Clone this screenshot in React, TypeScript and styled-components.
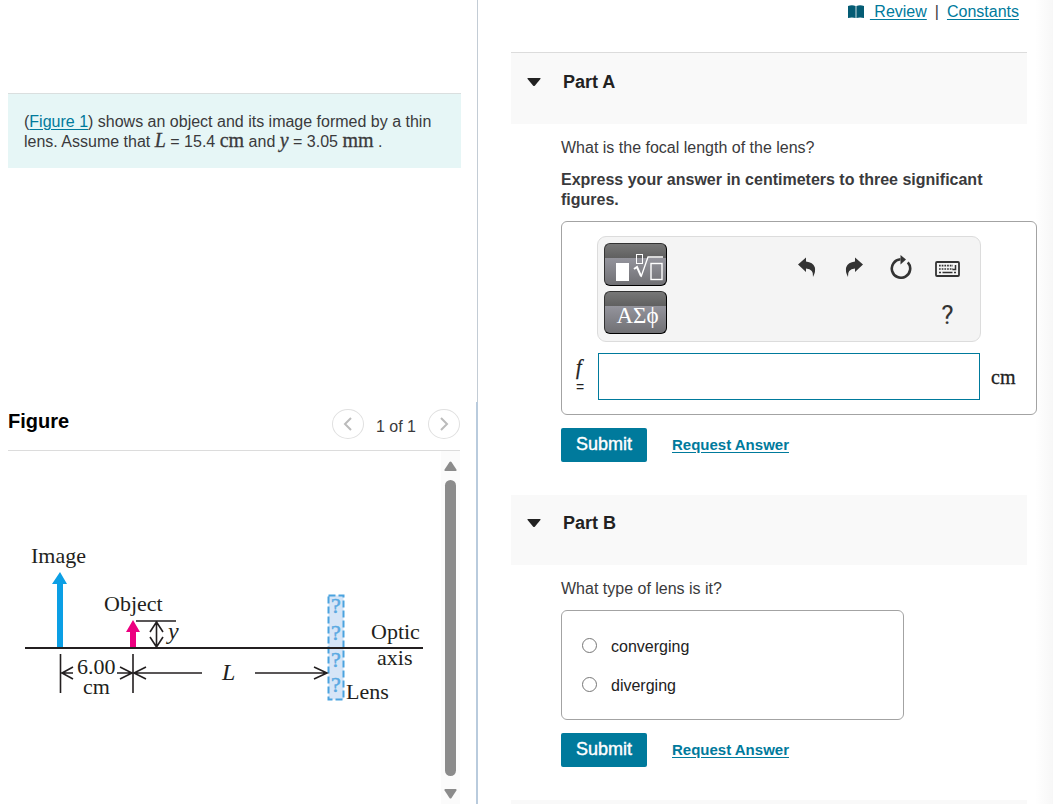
import React, { useState } from "react";
import styled, { createGlobalStyle } from "styled-components";

const sans = `"Liberation Sans", Arial, sans-serif`;
const serif = `"Liberation Serif", "Times New Roman", serif`;
const teal = "#007a9c";

const GlobalStyle = createGlobalStyle`
  *, *::before, *::after { box-sizing: border-box; }
  body {
    margin: 0;
    background: #fff;
    color: #3a3a3c;
    font: 16px/20px ${sans};
  }
  h1, h2, p, fieldset { margin: 0; }
  button, input { font: inherit; color: inherit; }
`;

const Page = styled.div`
  display: grid;
  grid-template-columns: minmax(0, 478fr) minmax(0, 575fr);
  min-height: 100vh;
`;

const LeftColumn = styled.div`
  display: grid;
  grid-template-rows: 1fr 1fr;
  min-width: 0;
`;

const IntroPane = styled.section`
  padding: 93px 16px 16px 8px;
  border-right: 1px solid #c3ccd5;
`;

const Intro = styled.p`
  padding: 18px 16px 16px;
  border-top: 1px solid #dadfdf;
  background: #e6f6f6;
`;

const Link = styled.a<{ $strong?: boolean }>`
  color: ${teal};
  font-size: ${(p) => (p.$strong ? "15px" : "16px")};
  font-weight: ${(p) => (p.$strong ? 700 : 400)};
  text-underline-offset: 2px;
`;

const MathText = styled.span<{ $italic?: boolean }>`
  font-family: ${serif};
  font-size: 20px;
  line-height: 16px;
  font-style: ${(p) => (p.$italic ? "italic" : "normal")};
  -webkit-text-stroke: 0.3px currentColor;
`;

const FigurePane = styled.section`
  display: flex;
  flex-direction: column;
  padding: 0 16px 0 8px;
  border-right: 2px solid #b9cbdd;
`;

const FigureHeader = styled.header`
  display: flex;
  align-items: center;
  justify-content: space-between;
  height: 49px;
  padding-bottom: 4px;
  border-bottom: 1px solid #dcdcdc;
`;

const FigureTitle = styled.h2`
  color: #000;
  font-size: 20px;
  line-height: 24px;
  padding-bottom: 6px;
`;

const Pager = styled.nav`
  display: flex;
  align-items: center;
  gap: 12px;
`;

const PagerLabel = styled.span`
  padding-top: 6px;
`;

const PagerButton = styled.button`
  display: grid;
  place-items: center;
  width: 32px;
  height: 30px;
  padding: 0;
  border: 1px solid #e0e0e0;
  border-radius: 50%;
  background: #fff;
`;

const FigureBody = styled.div`
  display: flex;
  flex: 1;
  justify-content: space-between;
`;

const Diagram = styled.svg`
  display: block;
  width: 400px;
  max-width: 100%;
  height: 170px;
  margin: 84px 0 0 17px;
  font-family: ${serif};
  font-size: 22px;
  fill: #231f20;
`;

const ScrollTrack = styled.div`
  display: flex;
  flex-direction: column;
  align-items: center;
  gap: 9px;
  width: 19px;
  padding: 10px 0 5px;
  background: #fbfbfb;
`;

const ScrollThumb = styled.div`
  flex: 1;
  width: 11px;
  margin-bottom: 4px;
  border-radius: 6px;
  background: #8b8b8b;
`;

const RightColumn = styled.main`
  display: flex;
  flex-direction: column;
  min-width: 0;
  padding: 0 16px 0 33px;
  background: linear-gradient(to left, #f7f7f7, #fff 18px);
`;

const Resources = styled.nav`
  display: flex;
  justify-content: flex-end;
  align-items: center;
  gap: 8px;
  height: 52px;
  padding: 0 18px 28px 0;
`;

const ReviewLink = styled.span`
  display: flex;
  align-items: center;
  gap: 6px;
`;

const PartHeader = styled.header<{ $ruled?: boolean }>`
  height: ${(p) => (p.$ruled ? "72px" : "70px")};
  margin-right: 10px;
  padding: ${(p) => (p.$ruled ? "19px" : "18px")} 16px;
  border-top: ${(p) => (p.$ruled ? "1px solid #dcdcdc" : "0")};
  background: #f9f9f9;
`;

const PartToggle = styled.button`
  display: flex;
  align-items: center;
  gap: 22px;
  padding: 0;
  border: 0;
  background: none;
  color: #222;
  font-size: 18px;
  font-weight: 700;
  line-height: 20px;
`;

const PartBody = styled.div`
  padding: 14px 0 33px 50px;
`;

const Prompt = styled.div`
  display: flex;
  flex-direction: column;
  gap: 12px;
  margin-bottom: 11px;
`;

const Directions = styled.p`
  max-width: 460px;
  font-weight: 700;
`;

const AnswerBox = styled.div`
  display: grid;
  grid-template-columns: 36px minmax(0, 1fr) 56px;
  row-gap: 11px;
  padding: 14px 0;
  border: 1px solid #a3a3a3;
  border-radius: 6px;
  background: #fff;
`;

const Toolbar = styled.div`
  grid-column: 1 / -1;
  display: flex;
  justify-content: space-between;
  height: 106px;
  margin: 0 55px 0 35px;
  padding: 6px 9px 6px 6px;
  border: 1px solid #dcdcdc;
  border-radius: 9px;
  background: #f4f4f4;
`;

const PaletteStack = styled.div`
  display: flex;
  flex-direction: column;
  gap: 5px;
`;

const PaletteButton = styled.button`
  display: grid;
  place-items: end center;
  width: 63px;
  height: 43px;
  padding: 0 0 3px 4px;
  border: 1px solid #333;
  border-right-color: #000;
  border-bottom-color: #000;
  border-radius: 6px;
  background: linear-gradient(#777, #606060 14px, #94949c 14px, #707074);
  color: #fff;
  font-family: ${serif};
  font-size: 23px;
  line-height: 28px;
`;

const ToolGrid = styled.div`
  display: grid;
  grid-template-columns: repeat(4, 47px);
  grid-template-rows: 48px 48px;
`;

const ToolButton = styled.button<{ $last?: boolean }>`
  grid-column: ${(p) => (p.$last ? 4 : "auto")};
  display: grid;
  place-items: center;
  padding: 0;
  border: 0;
  background: none;
  color: #333;
  font-family: Roboto, sans-serif;
  font-size: 26px;
  line-height: 28px;
`;

const VariableLabel = styled.label`
  display: flex;
  flex-direction: column;
  gap: 4px;
  padding: 6px 0 0 14px;
  color: #222;
  font-size: 14px;
  line-height: 16px;
`;

const AnswerInput = styled.input`
  width: 100%;
  height: 47px;
  padding: 0 8px;
  border: 1px solid ${teal};
  border-radius: 0;
  background: #fff;
  outline: 0;
`;

const Unit = styled.span`
  align-self: center;
  padding-left: 11px;
  color: #222;
  font-family: ${serif};
  font-size: 20px;
  -webkit-text-stroke: 0.3px currentColor;
`;

const Actions = styled.div`
  display: flex;
  align-items: center;
  gap: 25px;
  margin-top: 13px;
`;

const SubmitButton = styled.button`
  width: 86px;
  height: 34px;
  padding: 0 0 2px;
  border: 0;
  border-radius: 2px;
  background: ${teal};
  color: #fff;
  font-size: 18px;
  -webkit-text-stroke: 0.4px #fff;
`;

const Choices = styled.fieldset`
  display: flex;
  flex-direction: column;
  gap: 19px;
  width: 100%;
  max-width: 343px;
  padding: 26px 20px 23px;
  border: 1px solid #a3a3a3;
  border-radius: 6px;
  background: #fff;
`;

const Choice = styled.label`
  display: flex;
  align-items: center;
  gap: 14px;
  color: #222;
`;

const Radio = styled.input`
  width: 15px;
  height: 15px;
  margin: 0 0 3px;
`;

const NextPart = styled.section`
  flex: 1;
  margin-right: 10px;
  background: #f9f9f9;
`;

const Caret = () => (
  <svg width="14" height="9" viewBox="0 0 14 9" aria-hidden="true">
    <path d="M1 0h12q1 0 .4 1L8 7.400q-1 1-2 0L.6 1Q0 0 1 0Z" fill="#222" />
  </svg>
);

const ScrollArrow = ({ down }: { down?: boolean }) => (
  <svg width="13" height="10" viewBox="0 0 13 10" aria-hidden="true">
    <path
      d={down ? "M1 0h11q1 .5.4 1.500L7.500 9q-1 1-2 0L.6 1.500Q0 .5 1 0Z" : "M1 10h11q1-.5.4-1.500L7.500 1q-1-1-2 0L.6 8.500Q0 9.500 1 10Z"}
      fill="#8b8b8b"
    />
  </svg>
);

const Chevron = ({ right }: { right?: boolean }) => (
  <svg width="10" height="14" viewBox="0 0 10 14" fill="none" stroke="#bbb" strokeWidth="2" aria-hidden="true">
    <path d={right ? "M2 1l6 6-6 6" : "M8 1L2 7l6 6"} />
  </svg>
);

const BookIcon = () => (
  <svg width="16" height="14" viewBox="0 0 16 14" aria-hidden="true">
    <path d="M0 1Q4-.6 7.600 1v12Q4 11.800 0 13ZM8.400 1Q12-.6 16 1v12q-4-1.200-7.600 0Z" fill="#045c74" />
  </svg>
);

const TemplateIcon = () => (
  <svg width="50" height="30" viewBox="0 0 50 30" fill="none" stroke="#fff" aria-hidden="true">
    <rect x="3" y="11" width="13" height="18" fill="#fff" stroke="none" />
    <rect x="23.500" y="2.500" width="6" height="9" />
    <path d="M21 17l3-2 4 9" strokeWidth="2" />
    <path d="M28 25l7-20h15" strokeWidth="1.300" />
    <rect x="38" y="11.500" width="11" height="16" strokeWidth="1.400" />
  </svg>
);

const CurvedArrow = ({ forward }: { forward?: boolean }) => (
  <svg width="18" height="20" viewBox="0 0 18 20" aria-hidden="true">
    <path
      transform={forward ? "matrix(-1 0 0 1 18 0)" : undefined}
      d="M0 7.500L8 .4V4.500q7 .8 8.800 5.700 1.200 4-1.800 9.800 1-8-7-8.500V15Z"
      fill="#333"
    />
  </svg>
);

const ResetIcon = () => (
  <svg width="22" height="24" viewBox="0 0 22 24" aria-hidden="true">
    <path d="M17.800 7.300A9.200 9.200 0 1 1 10.500 4.300" fill="none" stroke="#333" strokeWidth="2.600" />
    <path d="M10.500 0l5.500 4.600-5.500 4.800Z" fill="#333" />
  </svg>
);

const KeyboardIcon = () => (
  <svg width="25" height="20" viewBox="0 -4 25 20" fill="none" stroke="#333" aria-hidden="true">
    <rect x="1" y="1" width="23" height="14" rx="1" strokeWidth="1.800" />
    <path d="M4 4.700h14" strokeWidth="1.700" strokeDasharray="1.700 1" />
    <path d="M4 8h14" strokeWidth="1.700" strokeDasharray="1.700 1" />
    <path d="M4 11.500h2M7.500 11.500h10M19 11.500h2" strokeWidth="1.700" />
    <path d="M20.500 4v4.500h-3" strokeWidth="1.500" />
  </svg>
);

const LensDiagram = () => (
  <Diagram viewBox="25 535 400 170" role="img" aria-label="Image and object beside a thin lens on the optic axis">
    <text x="31" y="563">Image</text>
    <text x="104" y="611">Object</text>
    <text x="371" y="639">Optic</text>
    <text x="377" y="665">axis</text>
    <text x="346" y="699">Lens</text>
    <text x="77" y="674">6.00</text>
    <text x="83" y="694">cm</text>
    <text x="168" y="639" fontStyle="italic" fontSize="24">y</text>
    <text x="222" y="680" fontStyle="italic" fontSize="24">L</text>

    <path d="M57 648V584h-5l8-12 7 12h-4v64Z" fill="#0b9fe5" />
    <path d="M130 648V632h-4l7-12 7 12h-4v16Z" fill="#ec0080" />

    <rect x="328.500" y="595.500" width="15" height="104" fill="#d6e5f7" stroke="#4ba3df" strokeWidth="2" strokeDasharray="7 3" />
    <g fill="#5aa9e2" stroke="#5aa9e2" strokeWidth="0.500" fontSize="22">
      <text x="331" y="613">?</text>
      <text x="331" y="640">?</text>
      <text x="331" y="667">?</text>
      <text x="331" y="692">?</text>
    </g>

    <g fill="none" stroke="#231f20" strokeWidth="1.600">
      <path d="M25 648H423" strokeWidth="2" />
      <path d="M136 621H176M156.500 622v25M150 632l6.500-10 6.500 10M150 637l6.500 10 6.500-10" />
      <path d="M60.500 654v39M133 654v39" />
      <path d="M61 673H73M73 667l-11 6 11 6" />
      <path d="M117 673H202M120 667l12 6-12 6M146 667l-12 6 12 6" />
      <path d="M255 673H327M314 667l13 6-13 6" />
    </g>
  </Diagram>
);

export default function App() {
  const [answer, setAnswer] = useState("");

  return (
    <>
      <GlobalStyle />
      <Page>
        <LeftColumn>
          <IntroPane>
            <Intro>
              (<Link href="#figure">Figure 1</Link>) shows an object and its image formed by a thin lens. Assume that{" "}
              <MathText $italic>L</MathText> = 15.4 <MathText>cm</MathText> and <MathText $italic>y</MathText> = 3.05{" "}
              <MathText>mm</MathText> .
            </Intro>
          </IntroPane>
          <FigurePane id="figure">
            <FigureHeader>
              <FigureTitle>Figure</FigureTitle>
              <Pager aria-label="Figures">
                <PagerButton aria-label="Previous figure"><Chevron /></PagerButton>
                <PagerLabel>1 of 1</PagerLabel>
                <PagerButton aria-label="Next figure"><Chevron right /></PagerButton>
              </Pager>
            </FigureHeader>
            <FigureBody>
              <LensDiagram />
              <ScrollTrack aria-hidden="true">
                <ScrollArrow />
                <ScrollThumb />
                <ScrollArrow down />
              </ScrollTrack>
            </FigureBody>
          </FigurePane>
        </LeftColumn>

        <RightColumn>
          <Resources aria-label="Resources">
            <ReviewLink>
              <BookIcon />
              <Link href="#review">&nbsp;Review</Link>
            </ReviewLink>
            <span>|</span>
            <Link href="#constants">Constants</Link>
          </Resources>

          <section>
            <PartHeader $ruled>
              <PartToggle aria-expanded="true"><Caret />Part A</PartToggle>
            </PartHeader>
            <PartBody>
              <Prompt>
                <p>What is the focal length of the lens?</p>
                <Directions>Express your answer in centimeters to three significant figures.</Directions>
              </Prompt>
              <AnswerBox>
                <Toolbar role="toolbar" aria-label="Equation tools">
                  <PaletteStack>
                    <PaletteButton aria-label="Templates"><TemplateIcon /></PaletteButton>
                    <PaletteButton aria-label="Symbols">ΑΣϕ</PaletteButton>
                  </PaletteStack>
                  <ToolGrid>
                    <ToolButton aria-label="Undo"><CurvedArrow /></ToolButton>
                    <ToolButton aria-label="Redo"><CurvedArrow forward /></ToolButton>
                    <ToolButton aria-label="Reset"><ResetIcon /></ToolButton>
                    <ToolButton aria-label="Keyboard shortcuts"><KeyboardIcon /></ToolButton>
                    <ToolButton $last aria-label="Help">?</ToolButton>
                  </ToolGrid>
                </Toolbar>
                <VariableLabel htmlFor="focal-length">
                  <MathText $italic>f</MathText>
                  <span>=</span>
                </VariableLabel>
                <AnswerInput id="focal-length" value={answer} onChange={(e) => setAnswer(e.target.value)} />
                <Unit>cm</Unit>
              </AnswerBox>
              <Actions>
                <SubmitButton>Submit</SubmitButton>
                <Link $strong href="#answer-a">Request Answer</Link>
              </Actions>
            </PartBody>
          </section>

          <section>
            <PartHeader>
              <PartToggle aria-expanded="true"><Caret />Part B</PartToggle>
            </PartHeader>
            <PartBody>
              <Prompt>
                <p>What type of lens is it?</p>
              </Prompt>
              <Choices aria-label="What type of lens is it?">
                <Choice><Radio type="radio" name="lens" value="converging" />converging</Choice>
                <Choice><Radio type="radio" name="lens" value="diverging" />diverging</Choice>
              </Choices>
              <Actions>
                <SubmitButton>Submit</SubmitButton>
                <Link $strong href="#answer-b">Request Answer</Link>
              </Actions>
            </PartBody>
          </section>

          <NextPart aria-label="Part C" />
        </RightColumn>
      </Page>
    </>
  );
}
